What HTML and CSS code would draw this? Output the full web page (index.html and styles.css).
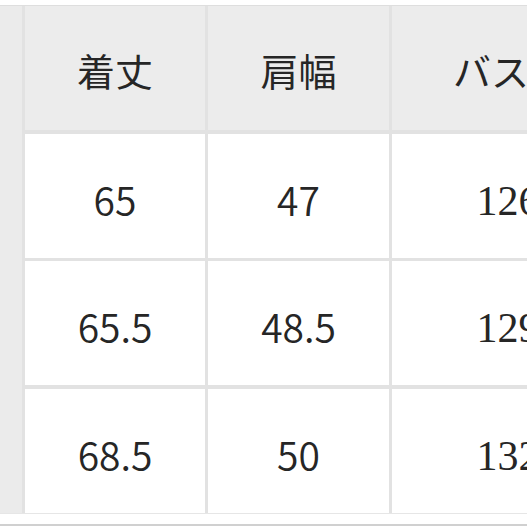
FILE: index.html
```html
<!DOCTYPE html>
<html lang="ja">
<head>
<meta charset="utf-8">
<link rel="stylesheet" href="styles.css">
</head>
<body>
<div class="page">
  <div class="table">
    <div class="strip"></div>
    <div class="cell head">着丈</div>
    <div class="cell head">肩幅</div>
    <div class="cell head">バスト</div>
    <div class="cell">65</div>
    <div class="cell">47</div>
    <div class="cell serif">126</div>
    <div class="cell">65.5</div>
    <div class="cell">48.5</div>
    <div class="cell serif">129</div>
    <div class="cell">68.5</div>
    <div class="cell">50</div>
    <div class="cell serif">132</div>
  </div>
  <div class="bottom-rule"></div>
</div>
</body>
</html>
```

FILE: styles.css
```css
html, body {
  margin: 0;
  padding: 0;
  background: #ffffff;
  overflow: hidden;
}
.page {
  width: 527px;
  height: 527px;
  padding-top: 5px;
  box-sizing: border-box;
  overflow: hidden;
}
.table {
  display: grid;
  grid-template-columns: 22px 180px 181px 236px;
  grid-template-rows: repeat(4, 124px);
  column-gap: 3px;
  row-gap: 3.5px;
  background: #e2e2e2;
  border-top: 1px solid #dedede;
  border-bottom: 1px solid #e6e6e6;
  width: 640px;
  font-family: "Noto Sans CJK JP", "Noto Sans", sans-serif;
  color: #262626;
}
.strip {
  grid-row: 1 / -1;
  background: #ebebeb;
}
.cell {
  background: #ffffff;
  display: flex;
  align-items: center;
  justify-content: center;
  font-size: 39px;
  font-weight: 350;
  line-height: 1;
  padding-top: 7px;
  box-sizing: border-box;
}
.cell.head {
  background: #ececec;
  font-weight: 400;
  font-size: 38px;
  padding-top: 4px;
}
.cell.serif {
  font-family: "Liberation Serif", serif;
  font-weight: 400;
  font-size: 42px;
  padding-top: 10px;
  padding-right: 4px;
}
.bottom-rule {
  margin-top: 10px;
  height: 2px;
  background: #d0d0d0;
}
```
